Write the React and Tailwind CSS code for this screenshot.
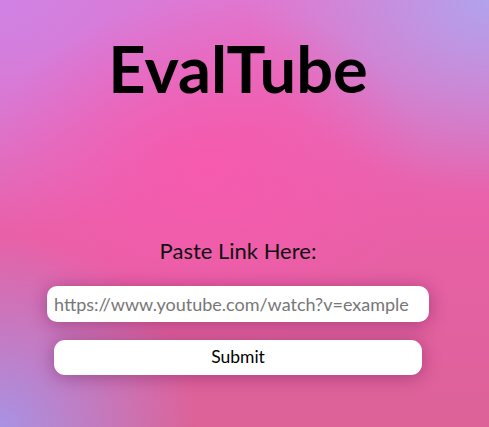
export default function App() {
  return (
    <div className="min-h-screen w-full overflow-hidden bg-[radial-gradient(ellipse_45%_40%_at_42%_40%,#f65aae_0%,rgba(246,90,174,0)_100%),radial-gradient(ellipse_60%_55%_at_0%_0%,#cf82e4_0%,rgba(207,130,228,0)_100%),radial-gradient(ellipse_50%_45%_at_100%_0%,#b2a2ec_0%,rgba(178,162,236,0)_100%),radial-gradient(ellipse_40%_45%_at_0%_100%,#a992e4_0%,rgba(169,146,228,0)_100%),linear-gradient(180deg,#e474cc_0%,#e960a8_50%,#dc6298_100%)] font-['Lato',sans-serif]">
      <div className="flex flex-col items-center pr-[13px]">
        <h1 className="mt-[36px] text-[65px] font-bold leading-none text-black">EvalTube</h1>
        <p className="mt-[139px] text-[22px] leading-none text-[#111]">Paste Link Here:</p>
        <input
          type="text"
          placeholder="https://www.youtube.com/watch?v=example"
          className="mt-[24px] h-[36px] w-[382px] rounded-[10px] bg-white px-[7px] text-[18px] text-black outline-none placeholder:text-[#777] shadow-[0_2px_18px_rgba(90,10,70,0.4)]"
        />
        <button className="mt-[18px] h-[35px] w-[368px] rounded-[11px] bg-white text-[17.5px] text-black shadow-[0_2px_18px_rgba(90,10,70,0.4)]">
          Submit
        </button>
      </div>
    </div>
  )
}
